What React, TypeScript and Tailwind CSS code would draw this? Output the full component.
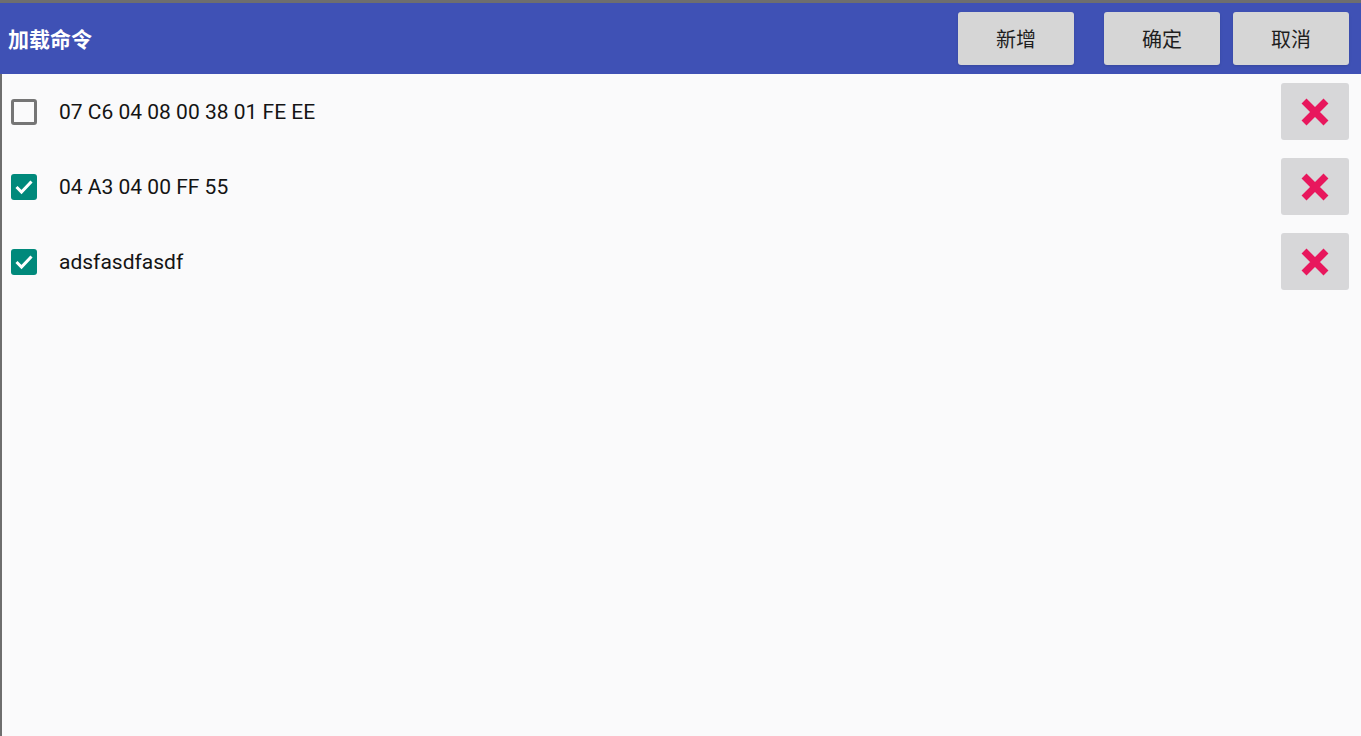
import { useState } from "react"

const initial = [
  { id: 1, text: "07 C6 04 08 00 38 01 FE EE", checked: false },
  { id: 2, text: "04 A3 04 00 FF 55", checked: true },
  { id: 3, text: "adsfasdfasdf", checked: true },
]

function CrossIcon() {
  return (
    <svg width="30" height="30" viewBox="0 0 30 30">
      <path d="M6.5 6.5 L23.5 23.5 M23.5 6.5 L6.5 23.5" stroke="#e8175d" strokeWidth="7" strokeLinecap="square" />
    </svg>
  )
}

export default function App() {
  const [items, setItems] = useState(initial)

  const toggle = (id: number) =>
    setItems(items.map((it) => (it.id === id ? { ...it, checked: !it.checked } : it)))

  return (
    <div
      className="h-[736px] w-full flex flex-col bg-[#fafafb] border-t-[3px] border-[#6e6e6e]"
      style={{ fontFamily: "Roboto, 'Noto Sans CJK SC', sans-serif" }}
    >
      {/* Header */}
      <div className="h-[71px] bg-[#3f51b5] flex items-center pl-[8px] pr-[12px]">
        <span className="text-white text-[21px] font-bold flex-1 pt-[4px]">加载命令</span>
        <button className="w-[116px] h-[53px] rounded-[3px] bg-[#d6d6d6] text-[#1e1e1e] text-[20px] shadow-sm pt-[3px]">
          新增
        </button>
        <button className="ml-[30px] w-[116px] h-[53px] rounded-[3px] bg-[#d6d6d6] text-[#1e1e1e] text-[20px] shadow-sm pt-[3px]">
          确定
        </button>
        <button className="ml-[13px] w-[116px] h-[53px] rounded-[3px] bg-[#d6d6d6] text-[#1e1e1e] text-[20px] shadow-sm pt-[3px]">
          取消
        </button>
      </div>

      {/* List */}
      <div className="flex-1 flex flex-col pt-[9px] pr-[12px] border-l-2 border-[#6e6e6e]">
        {items.map((it) => (
          <div key={it.id} className="h-[75px] flex items-start">
            <div className="flex items-center h-[57px] flex-1 pl-[9px]">
              <button
                onClick={() => toggle(it.id)}
                className={
                  it.checked
                    ? "w-[26px] h-[26px] rounded-[3px] bg-[#00897b] flex items-center justify-center"
                    : "w-[26px] h-[26px] rounded-[3px] border-[3px] border-[#757575]"
                }
              >
                {it.checked && (
                  <svg width="22" height="22" viewBox="0 0 22 22">
                    <path d="M3.5 11 L8.5 16 L18.5 5.5" stroke="white" strokeWidth="3" fill="none" />
                  </svg>
                )}
              </button>
              <span className="ml-[22px] text-[21px] text-[#141414] pt-[3px]">{it.text}</span>
            </div>
            <button className="w-[68px] h-[57px] rounded-[3px] bg-[#d7d7d9] flex items-center justify-center">
              <CrossIcon />
            </button>
          </div>
        ))}
      </div>
    </div>
  )
}
